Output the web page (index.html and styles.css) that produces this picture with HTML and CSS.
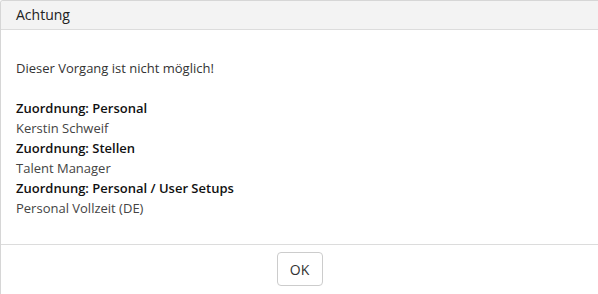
FILE: index.html
```html
<!DOCTYPE html>
<html lang="de">
<head>
  <meta charset="utf-8">
  <link rel="stylesheet" href="styles.css">
</head>
<body>
  <div class="dialog">
    <div class="dialog-header">Achtung</div>
    <div class="dialog-body">
      <p class="message">Dieser Vorgang ist nicht möglich!</p>
      <div class="label">Zuordnung: Personal</div>
      <div class="value">Kerstin Schweif</div>
      <div class="label">Zuordnung: Stellen</div>
      <div class="value">Talent Manager</div>
      <div class="label">Zuordnung: Personal / User Setups</div>
      <div class="value">Personal Vollzeit (DE)</div>
    </div>
    <div class="dialog-footer">
      <button class="button">OK</button>
    </div>
  </div>
</body>
</html>
```

FILE: styles.css
```css
* {
  box-sizing: border-box;
}

body {
  margin: 0;
  font-family: "Open Sans", sans-serif;
  font-size: 13px;
  line-height: 20px;
  color: #333333;
  background: #ffffff;
}

.dialog {
  width: 598px;
  height: 294px;
  border-left: 1px solid #d6d6d6;
  border-top: 1px solid #d6d6d6;
  border-top-left-radius: 3px;
  display: flex;
  flex-direction: column;
  overflow: hidden;
}

.dialog-header {
  height: 29px;
  padding: 4px 15px;
  background: #f3f3f3;
  border-bottom: 1px solid #dcdcdc;
  font-size: 14px;
  color: #222222;
}

.dialog-body {
  flex: 1;
  padding: 28px 15px 0;
  border-bottom: 1px solid #dcdcdc;
}

.message {
  margin: 0 0 20px;
}

.label {
  font-weight: 600;
  color: #111111;
}

.value {
  color: #444444;
}

.dialog-footer {
  height: 49px;
  display: flex;
  justify-content: center;
  padding-top: 7px;
}

.button {
  width: 46px;
  height: 34px;
  padding: 0;
  border: 1px solid #cccccc;
  border-radius: 4px;
  background: #ffffff;
  font-family: inherit;
  font-size: 14px;
  color: #333333;
  cursor: pointer;
}
```
